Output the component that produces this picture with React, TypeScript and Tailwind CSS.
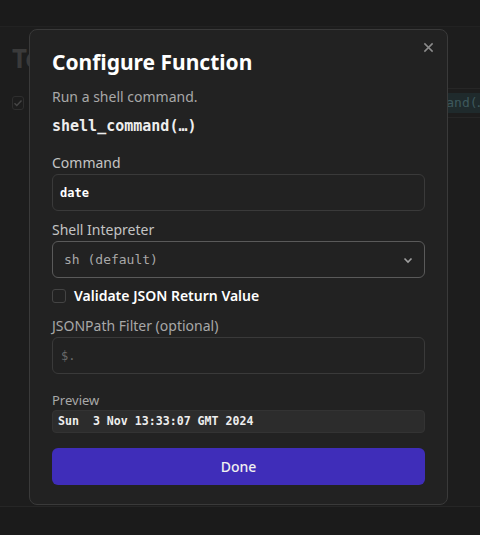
import React, { useState } from 'react';

const sans = { fontFamily: '"Noto Sans", "Open Sans", sans-serif' };
const mono = { fontFamily: '"DejaVu Sans Mono", "Liberation Mono", monospace' };

export default function App() {
  const [validate, setValidate] = useState(false);

  return (
    <div className="relative h-[535px] w-[480px] overflow-hidden bg-[#1b1b1b]" style={sans}>
      {/* page behind the dialog */}
      <div className="h-[27px] border-b border-[#222]" />
      <div className="h-[480px] border-b border-[#262626] bg-[#1d1d1d] pl-3 pt-3">
        <h1 className="text-[26px] font-bold text-[#3a3a3a]">Tools</h1>
        <div className="mt-[10px] flex items-center">
          <span className="flex h-[14px] w-[14px] items-center justify-center rounded-[3px] border border-[#2e2e2e]">
            <svg width="10" height="10" viewBox="0 0 10 10" fill="none" stroke="#464646" strokeWidth="1.4">
              <path d="M1.5 5.2l2.3 2.3 4.7-5" />
            </svg>
          </span>
          <div className="ml-[332px] flex h-[30px] items-center border-y border-[#262626] pl-2">
            <span className="whitespace-nowrap rounded-sm bg-[#1f2a2c] px-1 text-[13px] text-[#3d585c]" style={mono}>
              shell_command(…)
            </span>
          </div>
        </div>
      </div>

      {/* dialog */}
      <div className="absolute left-[29px] top-[29px] w-[419px] rounded-lg border border-[#3a3a3a] bg-[#222222] px-[22px] pb-[19px] pt-[18px]">
        <button className="absolute right-[13px] top-[12px] text-[#8c8c8c]">
          <svg width="11" height="11" viewBox="0 0 12 12" fill="none" stroke="currentColor" strokeWidth="1.6">
            <path d="M1.5 1.5l9 9M10.5 1.5l-9 9" />
          </svg>
        </button>
        <h2 className="text-[21px] font-bold leading-[28px] text-white">Configure Function</h2>
        <p className="mt-[11px] text-[14px] leading-5 text-[#a8a8a8]">Run a shell command.</p>
        <p className="mt-[9px] text-[15px] font-bold leading-5 text-[#eeeeee]" style={mono}>
          shell_command(…)
        </p>

        <label className="mt-[17px] block text-[14px] leading-5 text-[#c4c4c4]">Command</label>
        <div className="mt-[1px] flex h-[37px] items-center rounded-md border border-[#3a3a3a] bg-[#222] px-[7px]">
          <span className="text-[12px] font-bold text-white" style={mono}>date</span>
        </div>

        <label className="mt-[9px] block text-[14px] leading-5 text-[#c4c4c4]">Shell Intepreter</label>
        <div className="mt-[1px] flex h-[37px] items-center justify-between rounded-md border border-[#5a5a5a] bg-[#222] pl-[11px] pr-[10px]">
          <span className="text-[13px] text-[#a8a8a8]" style={mono}>sh (default)</span>
          <svg width="12" height="12" viewBox="0 0 12 12" fill="none" stroke="#a0a0a0" strokeWidth="1.6">
            <path d="M2.5 4.5L6 8l3.5-3.5" />
          </svg>
        </div>

        <label className="mt-[8px] flex h-5 items-center gap-[8px]" onClick={() => setValidate(!validate)}>
          <span className="h-[14px] w-[14px] rounded-[3px] border border-[#444] bg-[#222]" />
          <span className="text-[14px] font-semibold leading-5 text-white">Validate JSON Return Value</span>
        </label>

        <label className="mt-[10px] block text-[14px] leading-5 text-[#a8a8a8]">JSONPath Filter (optional)</label>
        <div className="mt-[1px] flex h-[37px] items-center rounded-md border border-[#3a3a3a] bg-[#222] px-[8px]">
          <span className="text-[12px] text-[#6a6a6a]" style={mono}>$.</span>
        </div>

        <label className="mt-[17px] block text-[13px] leading-[18px] text-[#a8a8a8]">Preview</label>
        <div className="mt-[1px] flex h-[23px] items-center rounded-[4px] border border-[#333] bg-[#2c2c2c] px-[5px]">
          <span className="whitespace-pre text-[11.6px] font-bold text-[#eeeeee]" style={mono}>
            Sun  3 Nov 13:33:07 GMT 2024
          </span>
        </div>

        <button className="mt-[15px] flex h-[37px] w-full items-center justify-center rounded-md bg-[#3f2db9] text-[14px] font-medium text-[#f0f0f0]">
          Done
        </button>
      </div>
    </div>
  );
}
